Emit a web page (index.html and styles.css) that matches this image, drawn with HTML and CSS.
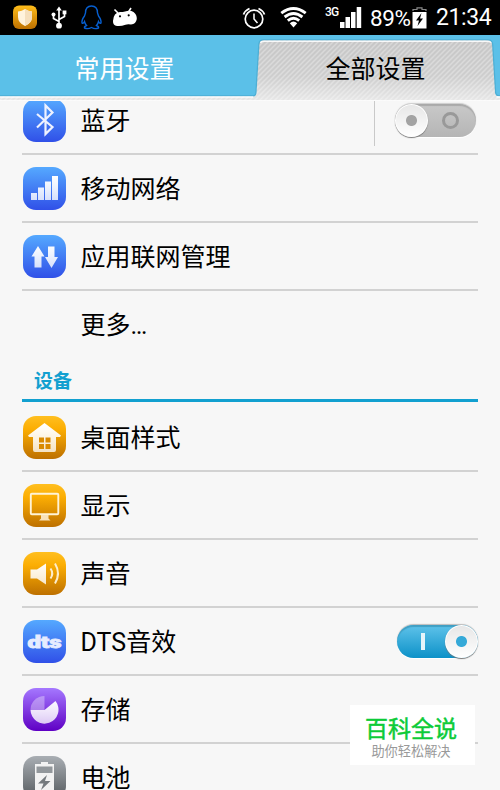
FILE: index.html
```
<!DOCTYPE html>
<html lang="zh-CN">
<head>
    <meta charset="UTF-8">
    <meta name="viewport" content="width=device-width, initial-scale=1.0">
    <title>设置</title>
    <link rel="stylesheet" href="styles.css">
</head>
<body>
    <svg class="defs" width="0" height="0">
        <defs>
            <linearGradient id="glyph" x1="0" y1="0" x2="0" y2="43" gradientUnits="userSpaceOnUse">
                <stop offset="0.2" stop-color="#fff"/>
                <stop offset="0.8" stop-color="#fff" stop-opacity="0.78"/>
            </linearGradient>
        </defs>
    </svg>

    <div class="status-bar">
        <div class="status-left">
            <svg width="150" height="35" viewBox="0 0 150 35">
                <defs>
                    <linearGradient id="shield-bg" x1="0" y1="0" x2="0" y2="1">
                        <stop offset="0" stop-color="#ffbd1a"/>
                        <stop offset="1" stop-color="#bd7000"/>
                    </linearGradient>
                </defs>
                <rect x="13" y="5.500" width="24" height="23.500" rx="6" fill="url(#shield-bg)"/>
                <path d="M18 11.500Q22 11 25 9Q28 11 32 11.500V17Q32 23 25 26Q18 23 18 17Z" fill="#fff3dd"/>
                <path d="M25 9Q28 11 32 11.500V17Q32 23 25 26Z" fill="#f5dfbd"/>
                <!-- usb -->
                <g stroke="#fff" stroke-width="1.700" fill="none">
                    <path d="M59 9V25M59 21.500L53.500 18.500V14M59 19.500L64.500 16.500V13"/>
                    <path d="M59 6.500L61.800 10.500H56.200Z" fill="#fff" stroke="none"/>
                    <circle cx="59" cy="25.700" r="2.900" fill="#fff" stroke="none"/>
                    <circle cx="53.500" cy="14.500" r="2" fill="#fff" stroke="none"/>
                    <rect x="62.600" y="10.500" width="3.800" height="3.800" fill="#fff" stroke="none"/>
                </g>
                <!-- penguin -->
                <path d="M85.500 13C85.500 8.500 88 6 91.500 6S97.500 8.500 97.500 13L98.500 16Q101.500 20 101 23Q100 24 98.500 21.500Q98 24 96.500 25.500Q99 26.500 98.500 28Q95 29.500 91.500 27.500Q88 29.500 84.500 28Q84 26.500 86.500 25.500Q85 24 84.500 21.500Q83 24 82 23Q81.500 20 84.500 16Z" fill="none" stroke="#075fd0" stroke-width="1.400"/>
                <!-- android head -->
                <path d="M114.500 9.500L118 13M131 8L128.500 12" stroke="#fff" stroke-width="1.600"/>
                <path d="M113 21Q113.500 12.500 120 12Q123 12 125 11.500Q130 9.800 133.500 12Q137 14.500 136.800 19Q136 24 131 24.500Q127 24 125.500 24.800Q121 26.500 117 26Q112.800 25.500 113 21Z" fill="#fff"/>
                <circle cx="120" cy="16.300" r="1.100" fill="#000"/>
                <circle cx="128.700" cy="15.300" r="1.100" fill="#000"/>
            </svg>
        </div>
        <div class="status-right">
            <svg class="alarm" width="24" height="24" viewBox="0 0 24 24" fill="none" stroke="#fff">
                <circle cx="12" cy="13" r="8.800" stroke-width="1.700"/>
                <path d="M12 7.500V13L15.500 17" stroke-width="1.500"/>
                <path d="M1.500 8.500Q3 4.500 7.500 2.500M22.500 8.500Q21 4.500 16.500 2.500" stroke-width="1.800"/>
            </svg>
            <svg class="wifi" width="27" height="21" viewBox="0 0 27 21" fill="none" stroke="#fff" stroke-width="2.900">
                <path d="M1.300 6.200Q13.500 -3.200 25.700 6.200M4.600 10Q13.500 3 22.400 10M7.800 13.700Q13.500 9 19.200 13.700"/>
                <path d="M9.800 16.200Q13.500 13 17.200 16.200L13.500 20.500Z" fill="#fff" stroke="none"/>
            </svg>
            <span class="net">3G</span>
            <svg class="bars" width="22" height="21" viewBox="0 0 22 21" fill="#fff">
                <path d="M0 15h4.500v6H0zM5.500 10h4.500v11H5.500zM11 5h4.500v16H11zM16.700 0h4.500v21h-4.500z"/>
            </svg>
            <span class="percent">89%</span>
            <svg class="batt" width="15" height="22" viewBox="0 0 15 22">
                <path d="M1 4V2.500H5V.8H10V2.500H14V4" fill="none" stroke="#888" stroke-width="1.200"/>
                <path d="M0.500 5H14.500V21.500H0.500Z" fill="#fff"/>
                <path d="M9.500 6L4 13.500H7L5.500 19L11 11.500H8Z" fill="#000"/>
            </svg>
            <span class="clock">21:34</span>
        </div>
    </div>

    <div class="tabs">
        <svg class="tabs-bg" width="500" height="66" viewBox="0 0 500 66">
            <defs>
                <linearGradient id="tab-fill" x1="0" y1="0" x2="0" y2="1">
                    <stop offset="0" stop-color="#c6c6c6"/>
                    <stop offset="0.600" stop-color="#cecece"/>
                    <stop offset="1" stop-color="#e8e8e8"/>
                </linearGradient>
                <pattern id="hatch" width="5" height="5" patternUnits="userSpaceOnUse">
                    <path d="M-1 1L1 -1M0 5L5 0M4 6L6 4" stroke="#fff" stroke-opacity="0.300" stroke-width="1.500"/>
                </pattern>
            </defs>
            <rect width="500" height="66" fill="#5bc0e8"/>
            <path d="M0 61.500H253Q256 61.500 256.500 58.500L259.500 9Q260 5.500 263 5.500H488Q491.500 5.500 492 9L495 58Q495.500 61.500 500 61.500V66H0Z" fill="none" stroke="#338eb3" stroke-opacity="0.350" stroke-width="2.500"/>
            <path d="M0 61.500H253Q256 61.500 256.500 58.500L259.500 9Q260 5.500 263 5.500H488Q491.500 5.500 492 9L495 58Q495.500 61.500 500 61.500V66H0Z" fill="url(#tab-fill)"/>
            <path d="M0 61.500H253Q256 61.500 256.500 58.500L259.500 9Q260 5.500 263 5.500H488Q491.500 5.500 492 9L495 58Q495.500 61.500 500 61.500V66H0Z" fill="url(#hatch)"/>
            <path d="M0 62H253M496.500 62H500M260.500 8Q261 6.300 264 6.300H487Q490.500 6.300 491 8" fill="none" stroke="#fff" stroke-opacity="0.850" stroke-width="1.400"/>
            <path d="M0 65.500H500" stroke="#fff" stroke-opacity="0.800"/>
        </svg>
        <div class="tab">常用设置</div>
        <div class="tab active">全部设置</div>
    </div>

    <div class="list">
        <div class="row first">
            <div class="icon blue">
                <svg viewBox="0 0 43 43"><path d="M14 15L29.500 28L22.500 35V6.500L29.500 13.500L14 28.500" fill="none" stroke="#eef2ff" stroke-width="2.200"/></svg>
            </div>
            <span class="label">蓝牙</span>
            <div class="divider"></div>
            <div class="switch">
                <span class="ring"></span>
                <span class="knob"></span>
            </div>
        </div>
        <div class="row">
            <div class="icon blue">
                <svg viewBox="0 0 43 43"><path d="M8 26h6v7H8zM15 20.500h6V33h-6zM22 14.500h6V33h-6zM29 9h6v24h-6z" fill="url(#glyph)"/></svg>
            </div>
            <span class="label">移动网络</span>
        </div>
        <div class="row">
            <div class="icon blue">
                <svg viewBox="0 0 43 43"><path d="M15 11L21.500 21.500H18.500V32.500H11.500V21.500H8.500ZM25 11.500H31.500V22H35L28.500 33L22 22H25Z" fill="url(#glyph)"/></svg>
            </div>
            <span class="label">应用联网管理</span>
        </div>
        <div class="row plain">
            <div class="icon"></div>
            <span class="label">更多…</span>
        </div>

        <div class="section">设备</div>

        <div class="row">
            <div class="icon orange">
                <svg viewBox="0 0 43 43">
                    <path d="M21.500 7L38 19.500L37 21H33V34Q33 36 31 36H12Q10 36 10 34V21H6L5 19.500Z" fill="url(#glyph)"/>
                    <path d="M16 21.500h5v5h-5zM22.500 21.500h5v5h-5zM16 28h5v5h-5zM22.500 28h5v5h-5z" fill="#d98a00"/>
                </svg>
            </div>
            <span class="label">桌面样式</span>
        </div>
        <div class="row">
            <div class="icon orange">
                <svg viewBox="0 0 43 43">
                    <rect x="7.800" y="9.800" width="27.500" height="20.500" rx="1" fill="none" stroke="#fff3d6" stroke-width="1.900"/>
                    <path d="M18 31H25.500V34.500L27.500 36.500H16L18 34.500Z" fill="#f8e1b9"/>
                </svg>
            </div>
            <span class="label">显示</span>
        </div>
        <div class="row">
            <div class="icon orange">
                <svg viewBox="0 0 43 43">
                    <path d="M7.500 17.500H14L23 11.500V32.500L14 26.500H7.500Z" fill="url(#glyph)"/>
                    <path d="M27.500 16.500Q31 21.500 27.500 26.500M32 11.500Q38 21.500 32 31.500" fill="none" stroke="#fdedcc" stroke-width="2"/>
                </svg>
            </div>
            <span class="label">声音</span>
        </div>
        <div class="row">
            <div class="icon blue dts">
                <svg viewBox="0 0 43 43"><text x="4.500" y="27.500" textLength="34" lengthAdjust="spacingAndGlyphs">dts</text></svg>
            </div>
            <span class="label">DTS音效</span>
            <div class="switch on">
                <span class="bar"></span>
                <span class="knob"></span>
            </div>
        </div>
        <div class="row">
            <div class="icon purple">
                <svg viewBox="0 0 43 43">
                    <path d="M21.500 22L32.500 13A14 14 0 1 1 7.500 22Z" fill="url(#glyph)"/>
                    <path d="M21.500 22V8A14 14 0 0 0 7.500 22Z" fill="#fff" fill-opacity="0.350"/>
                </svg>
            </div>
            <span class="label">存储</span>
        </div>
        <div class="row">
            <div class="icon gray">
                <svg viewBox="0 0 43 43">
                    <path d="M18 6H25V8H31V38H12V8H18Z" fill="#f2f2f2"/>
                    <path d="M13.500 10.500H29.500V17H13.500Z" fill="#92979b"/>
                    <path d="M24 19L15 27.500H20.500L18 34L27.500 25H22Z" fill="#757a7e"/>
                </svg>
            </div>
            <span class="label">电池</span>
        </div>
    </div>

    <div class="watermark">
        <div class="wm-title">百科全说</div>
        <div class="wm-sub">助你轻松解决</div>
    </div>
</body>
</html>
```
FILE: styles.css
```
* {
    box-sizing: border-box;
}
body {
    margin: 0;
    height: 790px;
    display: flex;
    flex-direction: column;
    position: relative;
    overflow: hidden;
    background: #f7f7f7;
    font-family: Roboto, "Noto Sans CJK SC", sans-serif;
    color: #000;
}
.defs {
    position: absolute;
}

/* status bar */
.status-bar {
    display: flex;
    justify-content: space-between;
    height: 35px;
    flex: none;
    background: #000;
    color: #fff;
}
.status-right {
    display: flex;
    align-items: center;
    padding-right: 9px;
    white-space: nowrap;
}
.wifi {
    margin-left: 14px;
}
.net {
    margin: -12px 0 0 18px;
    width: 14px;
    font-size: 12px;
    font-weight: 500;
    line-height: 14px;
    letter-spacing: -0.8px;
}
.bars {
    margin-left: 1px;
}
.percent {
    margin-left: 8px;
    width: 42px;
    font-size: 22.5px;
    letter-spacing: -0.4px;
}
.clock {
    margin-left: 9px;
    width: 55px;
    font-size: 23px;
    letter-spacing: -0.4px;
}

/* tabs */
.tabs {
    position: relative;
    display: flex;
    height: 66px;
    flex: none;
}
.tabs-bg {
    position: absolute;
    left: 0;
    top: 0;
}
.tab {
    position: relative;
    width: 250px;
    padding-right: 1px;
    font-size: 25px;
    line-height: 70px;
    text-align: center;
    color: #fff;
}
.tab.active {
    color: #000;
    padding: 0 0 0 1px;
}

/* list */
.list {
    flex: 1;
    min-height: 0;
    overflow: hidden;
    padding: 0 22px;
}
.row {
    display: flex;
    align-items: center;
    height: 68px;
    border-bottom: 2px solid #d2d2d2;
}
.row.first {
    margin-top: -14px;
}
.row.plain {
    border-bottom-color: transparent;
}
.icon {
    width: 43px;
    height: 43px;
    margin-left: 1px;
    flex: none;
    border-radius: 13px;
}
.icon svg {
    display: block;
    width: 43px;
    height: 43px;
}
.blue {
    background: linear-gradient(#55a9ff, #3050e8);
}
.orange {
    background: linear-gradient(#ffbf20, #fcae03 30%, #bd7000);
}
.purple {
    background: linear-gradient(#a578ff, #5f00c4);
}
.gray {
    background: linear-gradient(#a9aeb3, #555a5e);
}
.dts text {
    fill: #e6ecff;
    stroke: #e6ecff;
    stroke-width: 0.8px;
    font: 900 16px Roboto, sans-serif;
}
.label {
    flex: 1;
    padding-top: 3px;
    margin-left: 14.5px;
    font-size: 25px;
    line-height: 36px;
}
.section {
    height: 43px;
    margin-bottom: 2px;
    padding: 9px 0 0 12px;
    border-bottom: 3px solid #12a0d0;
    color: #12a0d0;
    font-size: 19px;
    font-weight: bold;
    line-height: 28px;
}
.divider {
    width: 1px;
    height: 48px;
    margin: 4px 20px 0 0;
    background: #c9c9c9;
}

/* switches */
.switch {
    display: flex;
    align-items: center;
    position: relative;
    width: 81px;
    height: 33px;
    margin-right: 2px;
    border-radius: 17px;
    background: linear-gradient(#c9c9c9, #b5b5b5);
    box-shadow: inset 0 2px 1px #aaa, 0 -1px 1px #ccc, 0 1px 1px #fff;
}
.switch .knob {
    position: absolute;
    left: 0;
    top: 0;
    width: 33px;
    height: 33px;
    border-radius: 50%;
    background: radial-gradient(circle, #a3a3a3 5px, transparent 6px), linear-gradient(#e6e6e6, #fff);
    box-shadow: inset 0 0 0 1px #fff, 0 1px 1px #777;
}
.ring {
    width: 17px;
    height: 17px;
    margin-left: 47px;
    border: 3px solid #999;
    border-radius: 50%;
}
.switch.on {
    margin-right: 0;
    background: linear-gradient(#5fc3ea, #0d91c8);
    box-shadow: inset 0 2px 1px #409fc4, 0 -1px 1px #bbb, 0 1px 1px #fff;
}
.switch.on .knob {
    left: auto;
    right: 0;
    background: radial-gradient(circle, #35a9d8 5px, transparent 6px), linear-gradient(#e6e6e6, #fff);
}
.bar {
    width: 4px;
    height: 17px;
    margin-left: 24px;
    background: #e6f4fa;
}

/* watermark */
.watermark {
    position: absolute;
    left: 350px;
    top: 705px;
    width: 125px;
    height: 60px;
    padding: 10px 3px 0 0;
    background: #fff;
    text-align: center;
}
.wm-title {
    color: #0ccb38;
    font-size: 23px;
    font-weight: 400;
    -webkit-text-stroke: 0.5px #0ccb38;
    line-height: 30px;
}
.wm-sub {
    color: #999;
    font-size: 13.2px;
    line-height: 14px;
}
```
